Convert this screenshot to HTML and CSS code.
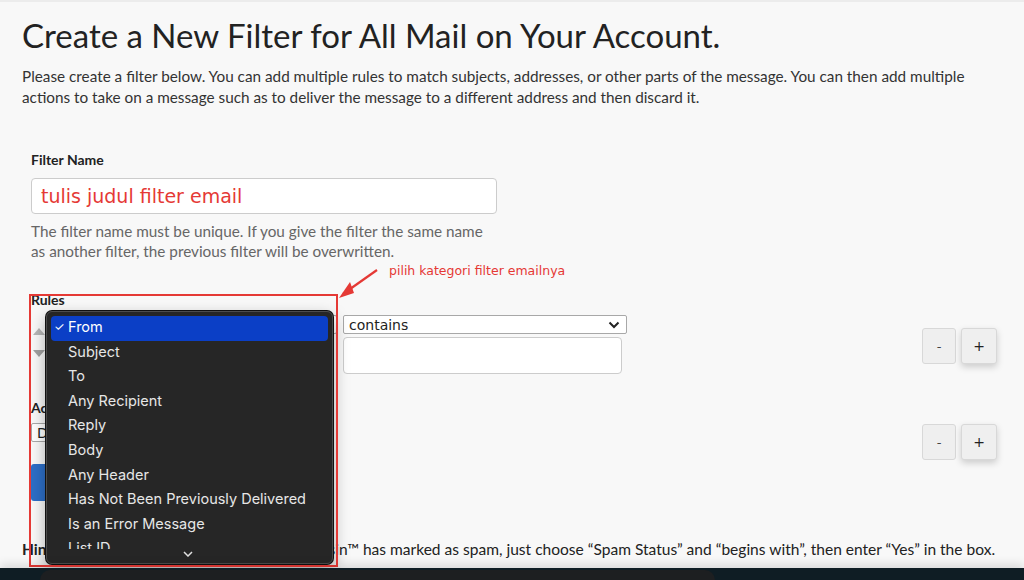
FILE: index.html
```html
<!DOCTYPE html>
<html lang="en">
<head>
<meta charset="utf-8">
<title>Create a New Filter</title>
<link rel="stylesheet" href="styles.css">
</head>
<body>
<div class="page">
  <h1 class="title">Create a New Filter for All Mail on Your Account.</h1>
  <p class="intro">Please create a filter below. You can add multiple rules to match subjects, addresses, or other parts of the message. You can then add multiple actions to take on a message such as to deliver the message to a different address and then discard it.</p>

  <div class="form">
    <div class="field-label">Filter Name</div>
    <div class="text-input name-input">tulis judul filter email</div>
    <p class="help">The filter name must be unique. If you give the filter the same name<br>as another filter, the previous filter will be overwritten.</p>

    <div class="field-label rules-label">Rules</div>
    <div class="rule-row">
      <div class="move">
        <svg width="12" height="8" viewBox="0 0 12 8"><path d="M0 8 L6 1 L12 8 Z" fill="#b5b5b5"/></svg>
        <svg width="12" height="8" viewBox="0 0 12 8"><path d="M0 0 L6 7 L12 0 Z" fill="#a0a0a0"/></svg>
      </div>
      <div class="rule-fields">
        <div class="select part-select"><span>From</span><svg width="10" height="6" viewBox="0 0 10 6"><path d="M1 1 L5 5 L9 1" fill="none" stroke="#333" stroke-width="1.6"/></svg></div>
        <div class="select match-select"><span>contains</span><svg width="12" height="8" viewBox="0 0 12 8"><path d="M1.5 1.5 L6 6 L10.5 1.5" fill="none" stroke="#222" stroke-width="2"/></svg></div>
        <div class="text-input value-input"></div>
      </div>
      <div class="pm">
        <div class="pm-btn">-</div>
        <div class="pm-btn plus">+</div>
      </div>
    </div>

    <div class="field-label actions-label">Actions</div>
    <div class="action-row">
      <div class="select action-select"><span>Deliver Message to Folder</span></div>
      <div class="pm">
        <div class="pm-btn">-</div>
        <div class="pm-btn plus">+</div>
      </div>
    </div>
    <div class="create-btn">Create</div>
  </div>

  <p class="hint"><b>Hint:</b> To filter all mail that Apache SpamAssassin™ has marked as spam, just choose “Spam Status” and “begins with”, then enter “Yes” in the box.</p>
</div>

<div class="menu">
  <ul class="menu-list">
    <li class="sel"><span class="check">✓</span>From</li>
    <li>Subject</li>
    <li>To</li>
    <li>Any Recipient</li>
    <li>Reply</li>
    <li>Body</li>
    <li>Any Header</li>
    <li>Has Not Been Previously Delivered</li>
    <li>Is an Error Message</li>
    <li>List ID</li>
  </ul>
  <div class="menu-more"><svg width="10" height="6" viewBox="0 0 10 6"><path d="M1 1 L5 5 L9 1" fill="none" stroke="#e0e0e0" stroke-width="1.5"/></svg></div>
</div>

<div class="mark-box"></div>
<svg class="mark-arrow" width="60" height="45" viewBox="0 0 60 45"><path d="M47 8 L13 32" stroke="#e53935" stroke-width="2.2" fill="none"/><path d="M9 36 L20 20 L24 31 Z" fill="#e53935"/></svg>
<div class="mark-note">pilih kategori filter emailnya</div>

<div class="dock"><div class="dock-panel"></div></div>
</body>
</html>
```

FILE: styles.css
```css
html, body {
  margin: 0;
  padding: 0;
}
body {
  background: #f8f8f8;
  font-family: Lato, "Open Sans", sans-serif;
  color: #222;
  width: 1024px;
  height: 580px;
  overflow: hidden;
  position: relative;
  border-top: 2px solid #ececec;
  box-sizing: border-box;
}
.page {
  padding: 13px 27px 0 22px;
}
.title {
  margin: 0;
  font-size: 33px;
  line-height: 40px;
  font-weight: 400;
  color: #222;
}
.intro {
  margin: 11px 0 0;
  font-size: 15.3px;
  line-height: 21px;
  color: #333;
}
.form {
  margin-top: 42px;
  padding-left: 9px;
}
.field-label {
  font-size: 14px;
  line-height: 20px;
  font-weight: 700;
  color: #222;
}
.text-input {
  background: #fff;
  border: 1px solid #ccc;
  border-radius: 4px;
  box-sizing: border-box;
}
.name-input {
  margin-top: 8px;
  width: 466px;
  height: 36px;
  padding: 0 9px;
  display: flex;
  align-items: center;
  color: #e53935;
  font-family: "DejaVu Sans", sans-serif;
  font-size: 19px;
}
.help {
  margin: 7px 0 0;
  font-size: 15.3px;
  line-height: 20px;
  color: #666;
}
.rules-label {
  margin-top: 29px;
}
.rule-row {
  margin-top: 5px;
  display: flex;
  align-items: flex-start;
}
.move {
  width: 14px;
  margin: 12px 4px 0 2px;
  display: flex;
  flex-direction: column;
  gap: 15px;
}
.rule-fields {
  display: grid;
  grid-template-columns: 286px 284px;
  column-gap: 6px;
  row-gap: 3px;
}
.select {
  box-sizing: border-box;
  height: 19px;
  background: #fff;
  border: 1px solid #a8a8a8;
  border-radius: 2px;
  display: flex;
  align-items: center;
  justify-content: space-between;
  padding: 0 6px 0 5px;
  font-family: "DejaVu Sans", sans-serif;
  font-size: 14px;
  color: #222;
  white-space: nowrap;
  overflow: hidden;
}
.value-input {
  grid-column: 2;
  width: 279px;
  height: 37px;
}
.pm {
  margin-left: auto;
  margin-top: 13px;
  display: flex;
  gap: 5px;
}
.pm-btn {
  width: 34px;
  height: 36px;
  box-sizing: border-box;
  background: #efefef;
  border: 1px solid #d8d8d8;
  border-radius: 3px;
  display: flex;
  align-items: center;
  justify-content: center;
  font-size: 13px;
  color: #444;
  font-family: "DejaVu Sans", sans-serif;
}
.pm-btn.plus {
  width: 36px;
  color: #222;
  font-size: 14px;
  box-shadow: 0 3px 7px rgba(0,0,0,0.18);
}
.actions-label {
  margin-top: 24px;
}
.action-row {
  margin-top: 5px;
  display: flex;
  align-items: flex-start;
}
.action-select {
  width: 200px;
}
.action-row .pm {
  margin-top: 1px;
}
.create-btn {
  margin-top: 4px;
  width: 110px;
  height: 37px;
  background: #2d6ec6;
  border-radius: 3px;
  color: #fff;
  font-size: 14px;
  display: flex;
  align-items: center;
  justify-content: center;
}
.hint {
  margin: 38px 0 0;
  font-size: 15.55px;
  line-height: 20px;
  color: #222;
  white-space: nowrap;
}

/* open native menu overlay */
.menu {
  position: absolute;
  left: 46px;
  top: 309px;
  width: 287px;
  height: 253px;
  box-sizing: border-box;
  background: #262626;
  border: 1px solid #4c4c4c;
  border-radius: 6px;
  box-shadow: 0 0 0 1px #111, 0 6px 16px rgba(0,0,0,0.35);
  padding: 4px 4px 0;
  font-family: Inter, "Open Sans", sans-serif;
  font-size: 14.5px;
  color: #e6e6e6;
  display: flex;
  flex-direction: column;
}
.menu-list {
  list-style: none;
  margin: 0;
  padding: 0;
  height: 233px;
  overflow: hidden;
}
.menu-list li {
  height: 24.6px;
  line-height: 22.6px;
  padding-left: 17px;
  position: relative;
  white-space: nowrap;
  box-sizing: border-box;
}
.menu-list li.sel {
  background: #0b3fc6;
  border-radius: 4px;
  color: #fff;
}
.check {
  position: absolute;
  left: 3px;
  top: 0;
  font-size: 12px;
}
.menu-more {
  flex: 1;
  display: flex;
  justify-content: center;
  align-items: flex-start;
  padding-top: 2px;
  padding-right: 4px;
}

/* annotations */
.mark-box {
  position: absolute;
  left: 29px;
  top: 292px;
  width: 309px;
  height: 273px;
  box-sizing: border-box;
  border: 2.5px solid #e53935;
}
.mark-arrow {
  position: absolute;
  left: 330px;
  top: 260px;
}
.mark-note {
  position: absolute;
  left: 389px;
  top: 261px;
  font-family: "DejaVu Sans", sans-serif;
  font-size: 12.5px;
  color: #e53935;
}

.dock {
  position: absolute;
  left: 0;
  right: 0;
  bottom: 0;
  height: 12px;
  background: #0f1d24;
  box-shadow: 0 -4px 10px rgba(0,0,0,0.12);
}
.dock-panel {
  margin-left: 40px;
  margin-top: 2px;
  width: 675px;
  height: 10px;
  background: #1d1f21;
  border-radius: 10px 10px 0 0;
}
```
